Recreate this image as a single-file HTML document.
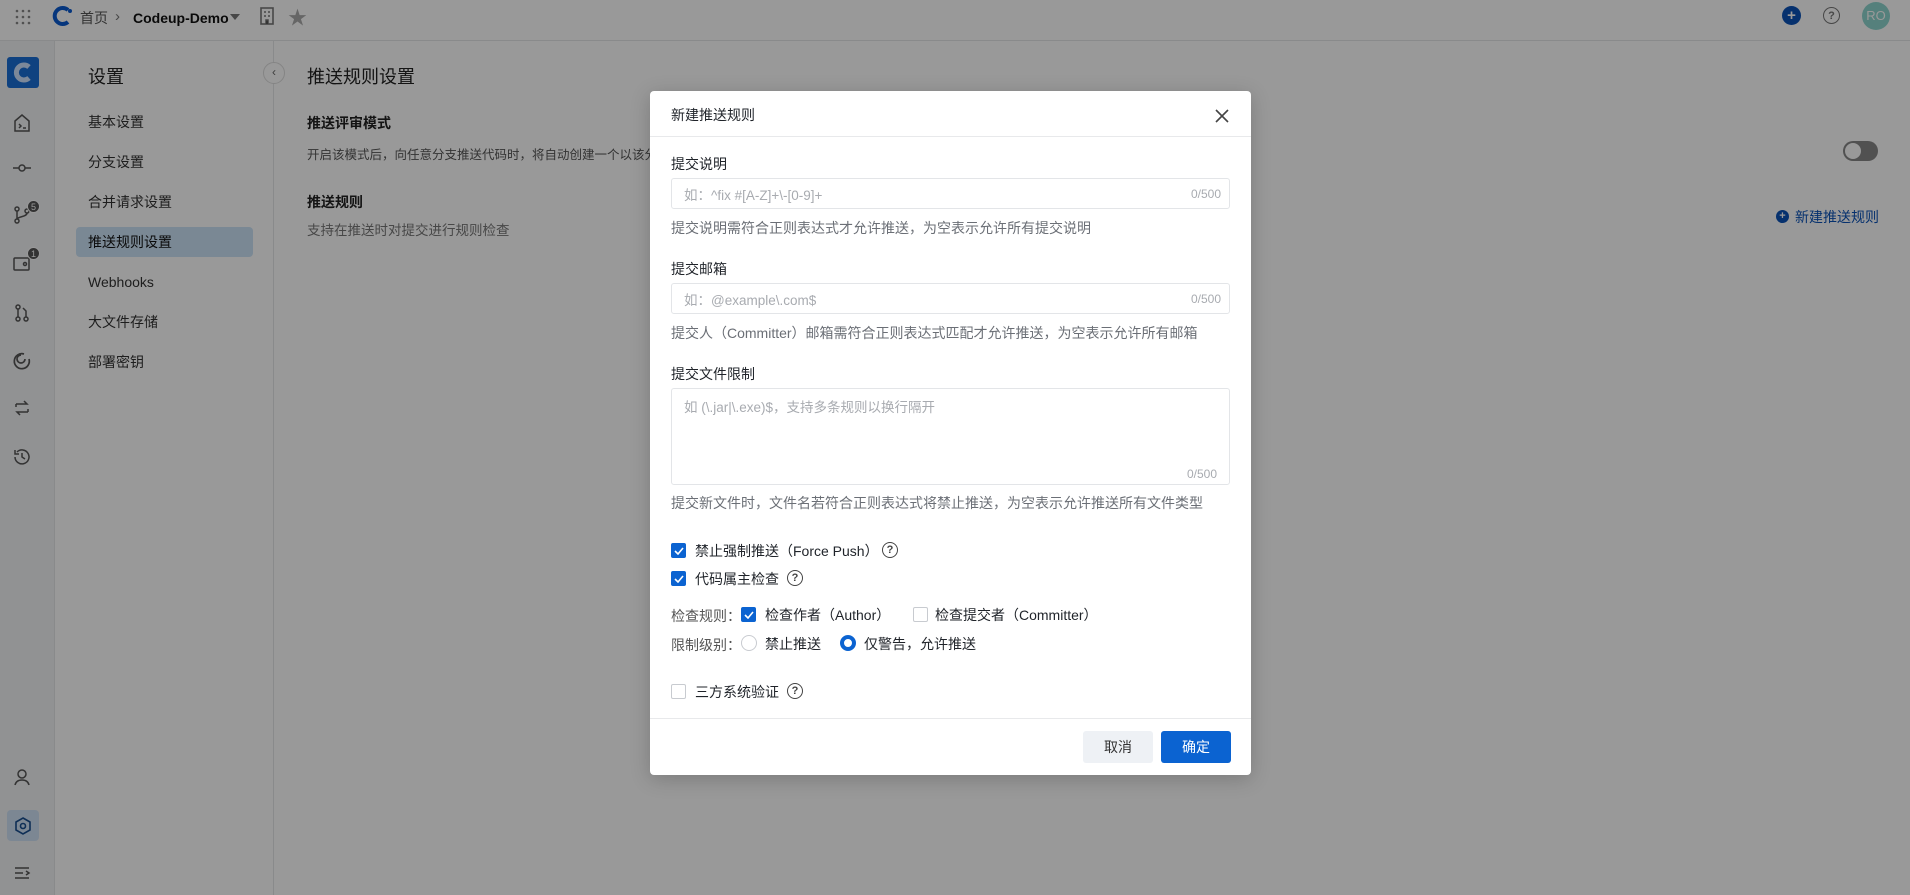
<!DOCTYPE html>
<html><head><meta charset="utf-8">
<style>
*{box-sizing:border-box;margin:0;padding:0}
body{width:1910px;height:895px;overflow:hidden;position:relative;background:#fff;font-family:"Liberation Sans","Noto Sans CJK SC",sans-serif;color:#1f2329;}
.a{position:absolute;white-space:nowrap}
.hdr{left:0;top:0;width:1910px;height:41px;border-bottom:1px solid #e5e6e8;background:#fff}
.rail{left:0;top:41px;width:55px;height:854px;background:#f2f3f5;border-right:1px solid #e5e6e8}
.nav{left:55px;top:41px;width:219px;height:854px;background:#fff;border-right:1px solid #e5e6e8}
.ni{left:88px;font-size:14px;color:#333;transform:translateY(-50%)}
.ov{left:0;top:0;width:1910px;height:895px;background:rgba(0,0,0,0.4)}
.modal{left:650px;top:91px;width:601px;height:684px;background:#fff;border-radius:4px;box-shadow:0 4px 20px rgba(0,0,0,.2)}
.m{font-size:14px;color:#1f2329}
.lbl{left:21px;transform:translateY(-50%)}
.inp{left:21px;width:559px;height:31px;border:1px solid #e3e5e8;border-radius:3px}
.ph{left:12px;top:50%;transform:translateY(-50%);color:#a8abb0;font-size:13.5px}
.cnt{right:8px;color:#a8abb0;font-size:12px}
.help{left:21px;color:#6b6f76;font-size:14px;transform:translateY(-50%)}
.cb{width:15px;height:15px;border-radius:2px;background:#0b63d1;display:flex;align-items:center;justify-content:center}
.cbo{width:15px;height:15px;border-radius:2px;border:1px solid #c8cbd0;background:#fff}
.q{width:16px;height:16px;border:1.5px solid #444;border-radius:50%;font-size:11px;font-weight:bold;display:flex;align-items:center;justify-content:center;color:#444}
</style></head><body>
<div class="a hdr"></div>
<svg class="a" style="left:15px;top:9px" width="16" height="16" viewBox="0 0 16 16" fill="#888"><g><circle cx="2" cy="2" r="1.3"/><circle cx="8" cy="2" r="1.3"/><circle cx="14" cy="2" r="1.3"/><circle cx="2" cy="8" r="1.3"/><circle cx="8" cy="8" r="1.3"/><circle cx="14" cy="8" r="1.3"/><circle cx="2" cy="14" r="1.3"/><circle cx="8" cy="14" r="1.3"/><circle cx="14" cy="14" r="1.3"/></g></svg>
<svg class="a" style="left:51px;top:5px" width="22" height="22" viewBox="0 0 22 22"><path d="M17 5A8 8 0 1 0 17 17" stroke="#0a5bd0" stroke-width="4" fill="none"/><circle cx="19" cy="6" r="2" fill="#0a5bd0"/></svg>
<div class="a" style="left:80px;top:7px;font-size:14px;color:#555;line-height:22px">首页</div>
<div class="a" style="left:115px;top:6px;font-size:15px;color:#777;line-height:22px">›</div>
<div class="a" style="left:133px;top:7px;font-size:14px;font-weight:bold;color:#111;line-height:22px">Codeup-Demo</div>
<div class="a" style="left:230px;top:14px;width:0;height:0;border-left:5px solid transparent;border-right:5px solid transparent;border-top:6px solid #777"></div>
<svg class="a" style="left:260px;top:7px" width="14" height="18" viewBox="0 0 14 18"><rect x="1" y="1" width="12" height="16" fill="none" stroke="#777" stroke-width="1.6"/><path d="M4 5h2M8 5h2M4 9h2M8 9h2M6 17v-4h2v4" stroke="#777" stroke-width="1.5"/></svg>
<div class="a" style="left:288px;top:3px;font-size:19px;color:#aaa">★</div>
<div class="a" style="left:1782px;top:6px;width:19px;height:19px;border-radius:50%;background:#0a52b8;color:#fff;font-size:15px;font-weight:bold;text-align:center;line-height:19px">+</div>
<div class="a q" style="left:1823px;top:7px;width:17px;height:17px;border-color:#777;color:#777">?</div>
<div class="a" style="left:1862px;top:2px;width:28px;height:28px;border-radius:50%;background:#8ed6cf;color:#fff;font-size:13px;text-align:center;line-height:28px">RO</div>
<div class="a rail"></div>
<div class="a" style="left:7px;top:57px;width:32px;height:31px;border-radius:3px;background:#1a6fd6"></div>
<svg class="a" style="left:11px;top:60px" width="24" height="25" viewBox="0 0 24 25"><path d="M18 7A7.5 7.5 0 1 0 18 18" stroke="#cfe3ff" stroke-width="5" fill="none"/></svg>
<svg class="a" style="left:12px;top:113px" width="20" height="20" viewBox="0 0 20 20" fill="none" stroke="#555" stroke-width="1.5"><path d="M3 8l7-6 7 6v10H3z"/><path d="M7 11l2 2-2 2M11 15h3"/></svg>
<svg class="a" style="left:12px;top:160px" width="20" height="16" viewBox="0 0 20 16" fill="none" stroke="#555" stroke-width="1.5"><path d="M1 8h6M13 8h6"/><circle cx="10" cy="8" r="3"/></svg>
<svg class="a" style="left:12px;top:205px" width="20" height="20" viewBox="0 0 20 20" fill="none" stroke="#555" stroke-width="1.5"><circle cx="5" cy="16" r="2"/><circle cx="5" cy="4" r="2"/><circle cx="15" cy="6" r="2"/><path d="M5 6v8M15 8c0 4-8 3-10 6"/></svg>
<div class="a" style="left:27px;top:200px;width:13px;height:13px;border-radius:50%;background:#555;color:#fff;font-size:9px;text-align:center;line-height:13px;border:1px solid #fff">5</div>
<svg class="a" style="left:12px;top:256px" width="20" height="16" viewBox="0 0 20 16" fill="none" stroke="#555" stroke-width="1.5"><rect x="2" y="2" width="15" height="12" rx="1"/><circle cx="13" cy="8" r="1.5"/></svg>
<div class="a" style="left:27px;top:247px;width:13px;height:13px;border-radius:50%;background:#555;color:#fff;font-size:9px;text-align:center;line-height:13px;border:1px solid #fff">1</div>
<svg class="a" style="left:12px;top:303px" width="20" height="20" viewBox="0 0 20 20" fill="none" stroke="#555" stroke-width="1.5"><circle cx="6" cy="4" r="2"/><circle cx="6" cy="16" r="2"/><circle cx="14" cy="16" r="2"/><path d="M6 6v8M14 14V8l-3-3"/></svg>
<svg class="a" style="left:12px;top:351px" width="20" height="20" viewBox="0 0 20 20" fill="none" stroke="#555" stroke-width="1.7"><path d="M17 8A7.5 7.5 0 1 1 12 3"/><path d="M13 8a4 4 0 1 1-4-4"/></svg>
<svg class="a" style="left:12px;top:398px" width="20" height="20" viewBox="0 0 20 20" fill="none" stroke="#555" stroke-width="1.5"><path d="M4 6h11l-3-3M16 14H5l3 3M4 6v3M16 14v-3"/></svg>
<svg class="a" style="left:12px;top:447px" width="20" height="20" viewBox="0 0 20 20" fill="none" stroke="#555" stroke-width="1.5"><path d="M3 10a7 7 0 1 0 2-5"/><path d="M3 3v4h4M10 6v4l3 2"/></svg>
<svg class="a" style="left:13px;top:768px" width="18" height="18" viewBox="0 0 18 18" fill="none" stroke="#555" stroke-width="1.5"><circle cx="9" cy="6" r="4"/><path d="M2 17c1-4 4-5 7-5s6 1 7 5"/></svg>
<div class="a" style="left:7px;top:810px;width:32px;height:31px;border-radius:4px;background:#cfe2f6"></div>
<svg class="a" style="left:13px;top:816px" width="20" height="20" viewBox="0 0 20 20" fill="none" stroke="#1a4f8f" stroke-width="1.6"><path d="M10 2l7 4v8l-7 4-7-4V6z"/><circle cx="10" cy="10" r="2.5"/></svg>
<svg class="a" style="left:13px;top:864px" width="18" height="18" viewBox="0 0 18 18" fill="none" stroke="#555" stroke-width="1.5"><path d="M2 4h14M2 9h8M2 14h14M13 7l3 2-3 2"/></svg>
<div class="a nav"></div>
<div class="a" style="left:88px;top:63px;font-size:18px;color:#222">设置</div>
<div class="a" style="left:263px;top:62px;width:22px;height:22px;border-radius:50%;border:1px solid #ddd;background:#fff;font-size:12px;color:#666;text-align:center;line-height:19px">‹</div>
<div class="a ni" style="top:122px">基本设置</div>
<div class="a ni" style="top:162px">分支设置</div>
<div class="a ni" style="top:202px">合并请求设置</div>
<div class="a" style="left:76px;top:227px;width:177px;height:30px;border-radius:4px;background:#cce3f7"></div>
<div class="a ni" style="top:242px;color:#111">推送规则设置</div>
<div class="a ni" style="top:282px">Webhooks</div>
<div class="a ni" style="top:322px">大文件存储</div>
<div class="a ni" style="top:362px">部署密钥</div>
<div class="a" style="left:307px;top:63px;font-size:18px;color:#222">推送规则设置</div>
<div class="a" style="left:307px;top:113px;font-size:14px;font-weight:bold;color:#222">推送评审模式</div>
<div class="a" style="left:307px;top:144px;font-size:12.5px;color:#555">开启该模式后，向任意分支推送代码时，将自动创建一个以该分支为目标的合并请求</div>
<div class="a" style="left:307px;top:192px;font-size:14px;font-weight:bold;color:#222">推送规则</div>
<div class="a" style="left:307px;top:219px;font-size:13.5px;color:#777">支持在推送时对提交进行规则检查</div>
<div class="a" style="left:1843px;top:141px;width:35px;height:20px;border-radius:10px;background:#888"><div style="position:absolute;left:2px;top:2px;width:16px;height:16px;border-radius:50%;background:#fff"></div></div>
<div class="a" style="left:1776px;top:210px;width:13px;height:13px;border-radius:50%;background:#0a52b8;color:#fff;font-size:11px;font-weight:bold;text-align:center;line-height:13px">+</div>
<div class="a" style="left:1795px;top:207px;font-size:14px;color:#0a52b8">新建推送规则</div>
<div class="a ov"></div>
<div class="a modal">
  <div class="a m" style="left:21px;top:14px">新建推送规则</div>
  <svg class="a" style="left:564px;top:17px" width="16" height="16" viewBox="0 0 16 16" stroke="#444" stroke-width="1.6"><path d="M2 2l12 12M14 2L2 14"/></svg>
  <div class="a" style="left:0;top:45px;width:601px;height:1px;background:#e8e9eb"></div>
  <div class="a m lbl" style="top:73px">提交说明</div>
  <div class="a inp" style="top:87px"><span class="a ph">如：^fix #[A-Z]+\-[0-9]+</span><span class="a cnt" style="top:8px">0/500</span></div>
  <div class="a help" style="top:137px">提交说明需符合正则表达式才允许推送，为空表示允许所有提交说明</div>
  <div class="a m lbl" style="top:178px">提交邮箱</div>
  <div class="a inp" style="top:192px"><span class="a ph">如：@example\.com$</span><span class="a cnt" style="top:8px">0/500</span></div>
  <div class="a help" style="top:242px">提交人（Committer）邮箱需符合正则表达式匹配才允许推送，为空表示允许所有邮箱</div>
  <div class="a m lbl" style="top:283px">提交文件限制</div>
  <div class="a inp" style="top:297px;height:97px"><span class="a ph" style="top:17px">如 (\.jar|\.exe)$，支持多条规则以换行隔开</span><span class="a cnt" style="top:78px;right:12px">0/500</span></div>
  <div class="a help" style="top:412px">提交新文件时，文件名若符合正则表达式将禁止推送，为空表示允许推送所有文件类型</div>
  <div class="a cb" style="left:21px;top:452px"><svg width="10" height="8" viewBox="0 0 10 8"><path d="M1 4l3 3 5-6" stroke="#fff" stroke-width="1.6" fill="none"/></svg></div>
  <div class="a m" style="left:45px;top:450px">禁止强制推送（Force Push）</div>
  <div class="a q" style="left:232px;top:451px">?</div>
  <div class="a cb" style="left:21px;top:480px"><svg width="10" height="8" viewBox="0 0 10 8"><path d="M1 4l3 3 5-6" stroke="#fff" stroke-width="1.6" fill="none"/></svg></div>
  <div class="a m" style="left:45px;top:478px">代码属主检查</div>
  <div class="a q" style="left:137px;top:479px">?</div>
  <div class="a" style="left:21px;top:515px;font-size:14px;color:#555">检查规则：</div>
  <div class="a cb" style="left:91px;top:516px"><svg width="10" height="8" viewBox="0 0 10 8"><path d="M1 4l3 3 5-6" stroke="#fff" stroke-width="1.6" fill="none"/></svg></div>
  <div class="a m" style="left:115px;top:514px">检查作者（Author）</div>
  <div class="a cbo" style="left:263px;top:516px"></div>
  <div class="a m" style="left:285px;top:514px">检查提交者（Committer）</div>
  <div class="a" style="left:21px;top:544px;font-size:14px;color:#555">限制级别：</div>
  <div class="a" style="left:91px;top:544px;width:16px;height:16px;border-radius:50%;border:1px solid #c8cbd0"></div>
  <div class="a m" style="left:115px;top:543px">禁止推送</div>
  <div class="a" style="left:190px;top:544px;width:16px;height:16px;border-radius:50%;border:4.5px solid #0b63d1;background:#fff"></div>
  <div class="a m" style="left:214px;top:543px">仅警告，允许推送</div>
  <div class="a cbo" style="left:21px;top:593px"></div>
  <div class="a m" style="left:45px;top:591px">三方系统验证</div>
  <div class="a q" style="left:137px;top:592px">?</div>
  <div class="a" style="left:0;top:627px;width:601px;height:1px;background:#e8e9eb"></div>
  <div class="a" style="left:433px;top:640px;width:70px;height:32px;border-radius:3px;background:#eef1f5;font-size:14px;color:#333;text-align:center;line-height:32px">取消</div>
  <div class="a" style="left:511px;top:640px;width:70px;height:32px;border-radius:3px;background:#0b63d1;font-size:14px;color:#fff;text-align:center;line-height:32px">确定</div>
</div>
</body></html>
